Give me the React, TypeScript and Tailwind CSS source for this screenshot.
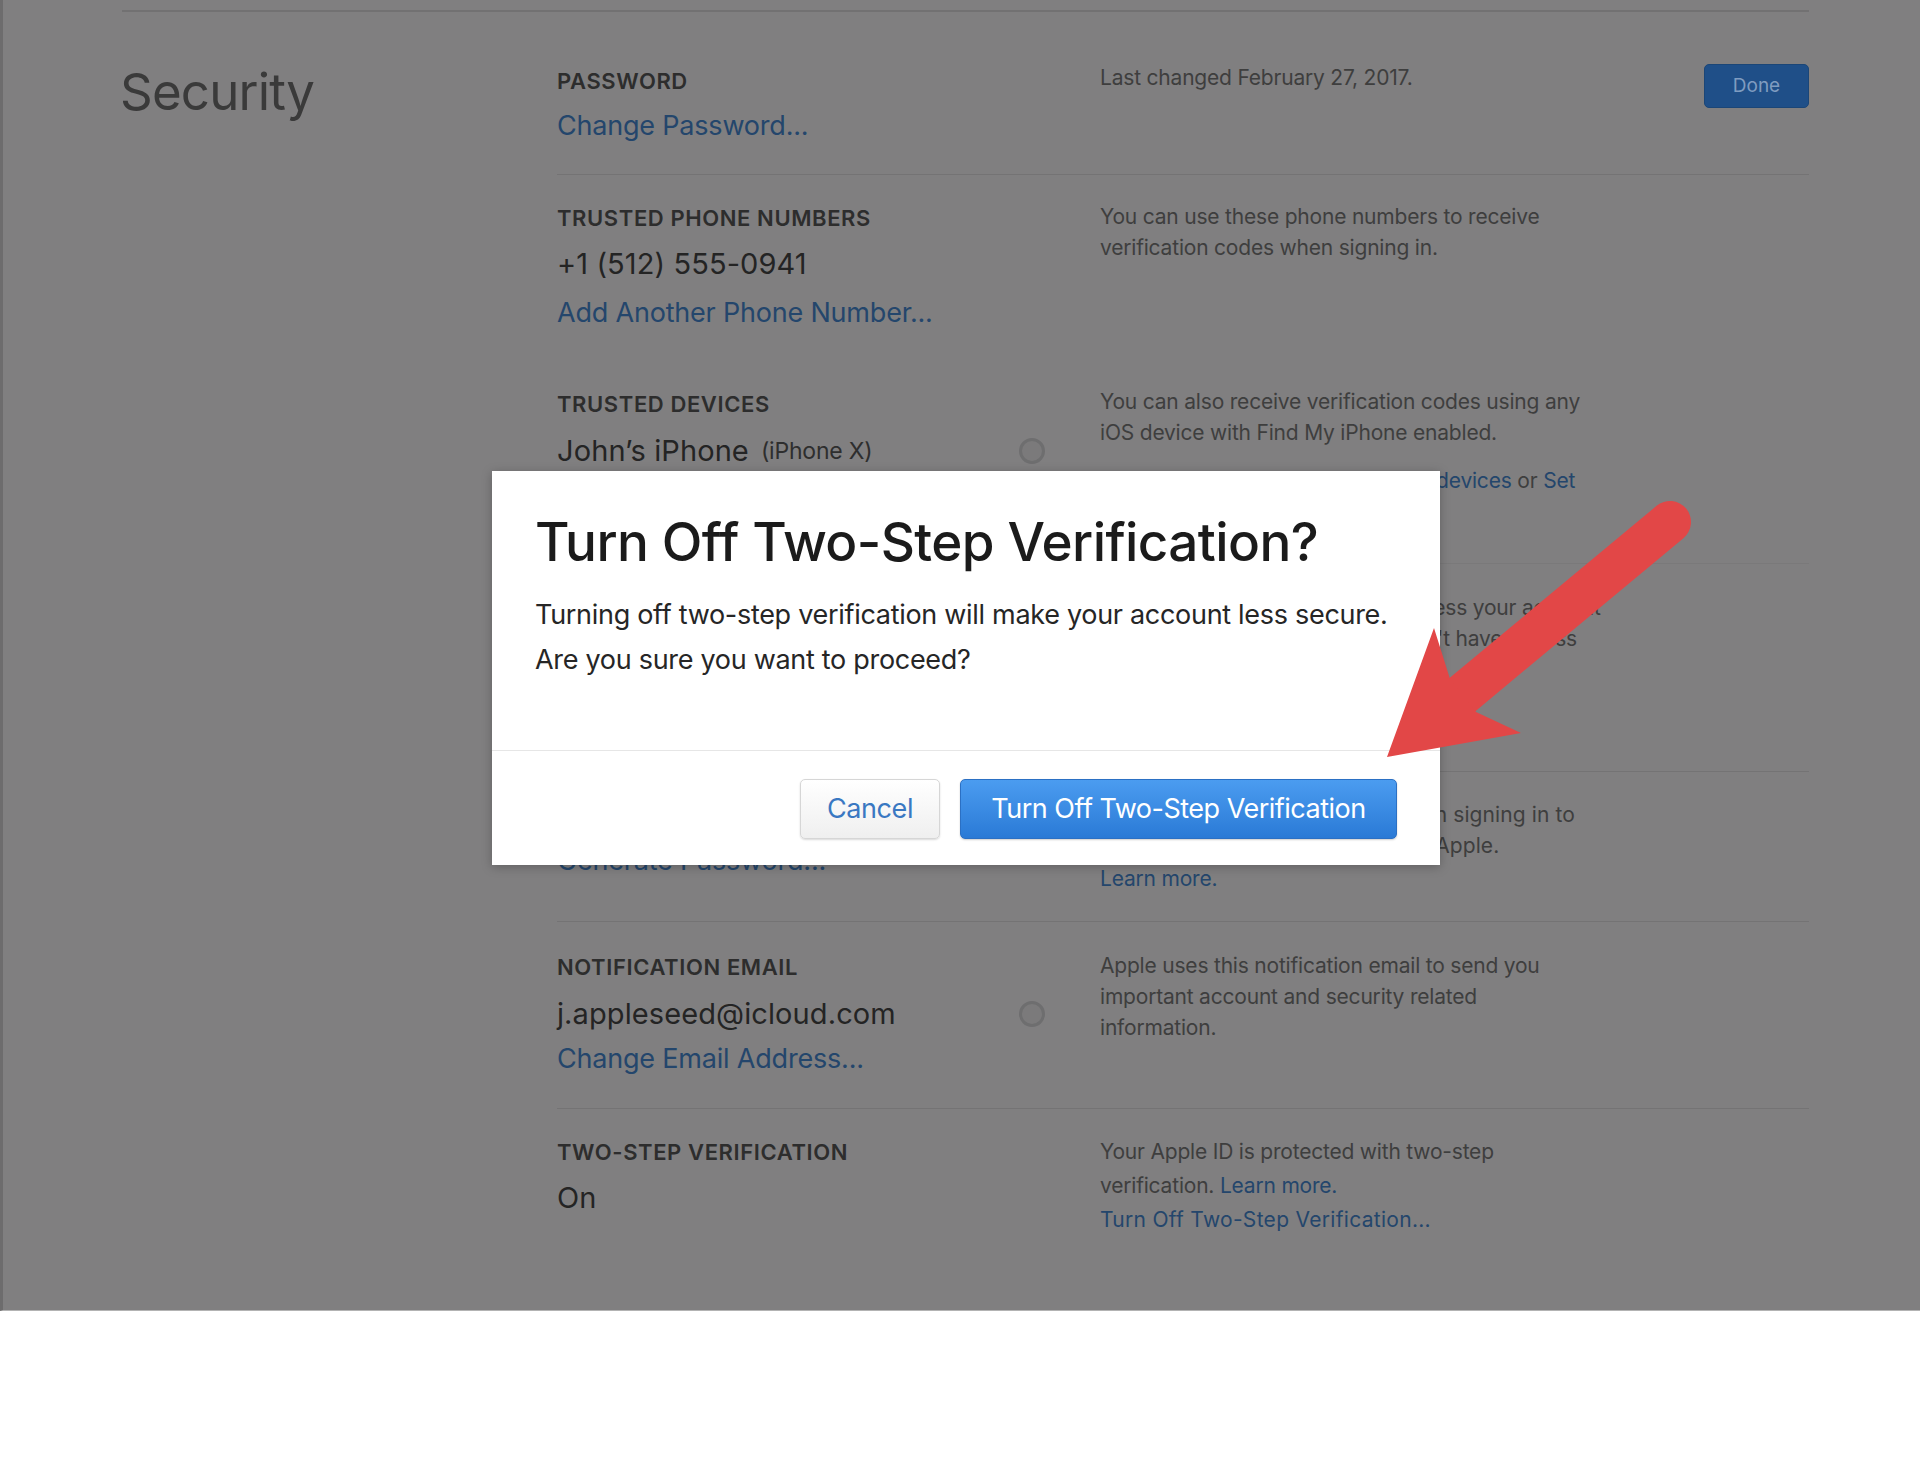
import type { ReactNode } from "react";

const Label = ({ children }: { children: ReactNode }) => (
  <div className="text-[22px] leading-[24px] font-semibold tracking-[0.6px] text-[#2d2d2d] uppercase">
    {children}
  </div>
);

const Value = ({ children, className = "" }: { children: ReactNode; className?: string }) => (
  <div className={`text-[29px] leading-[34px] text-[#242424] tracking-[0.1px] ${className}`}>{children}</div>
);

const Link = ({ children, className = "" }: { children: ReactNode; className?: string }) => (
  <div className={`text-[27px] leading-[34px] text-[#24466c] tracking-[-0.2px] ${className}`}>{children}</div>
);

const Desc = ({ children, className = "" }: { children: ReactNode; className?: string }) => (
  <div className={`text-[21px] leading-[31px] text-[#3e3e3e] tracking-[-0.2px] ${className}`}>{children}</div>
);

const Ring = () => (
  <div className="w-[26px] h-[26px] rounded-full border-[3px] border-[#6e6e6f] bg-[#7b7a7b]" />
);

function Arrow() {
  return (
    <svg
      className="absolute left-0 top-0 pointer-events-none"
      width="1920"
      height="1480"
      viewBox="0 0 1920 1480"
    >
      <line x1="1670" y1="522" x2="1462" y2="695" stroke="#e24747" strokeWidth="42" strokeLinecap="round" />
      <polygon points="1387,757 1434,628 1450,679 1476,712 1521,733" fill="#e24747" />
    </svg>
  );
}

export default function App() {
  return (
    <div className="relative w-[1920px] min-h-[1480px] bg-white font-['Inter','Liberation_Sans',sans-serif]">
      {/* dimmed settings page */}
      <div className="h-[1311px] bg-[#807f80] border-l-[3px] border-[#6d6c6d] border-b border-b-[#b3b3b3] overflow-hidden">
        <div className="ml-[119px] w-[1687px] pt-[10px]">
          <div className="h-[2px] bg-[#727172]" />
          <div className="grid grid-cols-[435px_1fr]">
            <div className="pt-[50px] -ml-[2px] text-[51px] leading-[60px] text-[#3a3a3a] tracking-[-0.8px]">
              Security
            </div>

            <div className="flex flex-col">
              {/* password */}
              <div className="h-[162px] grid grid-cols-[543px_1fr]">
                <div className="pt-[57px]">
                  <Label>Password</Label>
                  <Link className="mt-[16px]">Change Password...</Link>
                </div>
                <div className="flex justify-between items-start">
                  <Desc className="pt-[50px]">Last changed February 27, 2017.</Desc>
                  <div className="mt-[52px] w-[105px] h-[44px] rounded-[5px] bg-[#1f4f88] border border-[#1b4677] flex items-center justify-center text-[19px] text-[#7f9cc0]">
                    Done
                  </div>
                </div>
              </div>

              {/* phone numbers + devices */}
              <div className="h-[389px] border-t border-[#747374] grid grid-cols-[543px_1fr]">
                <div className="pt-[31px]">
                  <Label>Trusted Phone Numbers</Label>
                  <Value className="mt-[17px]">+1 (512) 555-0941</Value>
                  <Link className="mt-[15px]">Add Another Phone Number...</Link>
                  <div className="mt-[62px]">
                    <Label>Trusted Devices</Label>
                  </div>
                  <div className="mt-[18px] flex items-center pr-[55px]">
                    <Value className="tracking-[-0.3px]">John’s iPhone</Value>
                    <span className="ml-[12px] text-[23px] text-[#2e2e2e] tracking-[-0.2px]">(iPhone X)</span>
                    <div className="ml-auto">
                      <Ring />
                    </div>
                  </div>
                </div>
                <div className="pt-[26px]">
                  <Desc>
                    You can use these phone numbers to receive
                    <br />
                    verification codes when signing in.
                  </Desc>
                  <Desc className="mt-[123px]">
                    You can also receive verification codes using any
                    <br />
                    iOS device with Find My iPhone enabled.
                  </Desc>
                  <Desc className="mt-[17px]">
                    <span className="text-[#24466c]">See more about managing trusted devices</span> or{" "}
                    <span className="text-[#24466c]">Set</span>
                  </Desc>
                </div>
              </div>

              {/* recovery */}
              <div className="h-[208px] border-t border-[#7a797a] grid grid-cols-[543px_1fr]">
                <div />
                <div className="pt-[28px]">
                  <Desc>
                    Recovery keys can be used to access your account
                    <br />
                    if you forgot your password or don't have access
                  </Desc>
                </div>
              </div>

              {/* app-specific passwords */}
              <div className="h-[150px] border-t border-[#747374] grid grid-cols-[543px_1fr]">
                <div className="pt-[72px]">
                  <Link>Generate Password...</Link>
                </div>
                <div className="pt-[27px]">
                  <Desc className="tracking-[0.1px]">
                    Use app-specific passwords when signing in to
                    <br />
                    apps or services not provided by Apple.
                  </Desc>
                  <Desc className="text-[#24466c] mt-[2px]">Learn more.</Desc>
                </div>
              </div>

              {/* notification email */}
              <div className="h-[187px] border-t border-[#747374] grid grid-cols-[543px_1fr]">
                <div className="pt-[33px]">
                  <Label>Notification Email</Label>
                  <div className="mt-[18px] flex items-center pr-[55px]">
                    <Value>j.appleseed@icloud.com</Value>
                    <div className="ml-auto">
                      <Ring />
                    </div>
                  </div>
                  <Link className="mt-[11px]">Change Email Address...</Link>
                </div>
                <div className="pt-[28px]">
                  <Desc>
                    Apple uses this notification email to send you
                    <br />
                    important account and security related
                    <br />
                    information.
                  </Desc>
                </div>
              </div>

              {/* two-step */}
              <div className="border-t border-[#747374] grid grid-cols-[543px_1fr]">
                <div className="pt-[31px]">
                  <Label>Two-Step Verification</Label>
                  <Value className="mt-[17px]">On</Value>
                </div>
                <div className="pt-[26px]">
                  <Desc className="leading-[34px]">
                    Your Apple ID is protected with two-step
                    <br />
                    verification. <span className="text-[#24466c]">Learn more.</span>
                  </Desc>
                  <Desc className="leading-[34px] text-[#24466c] tracking-[0.3px]">Turn Off Two-Step Verification...</Desc>
                </div>
              </div>
            </div>
          </div>
        </div>
      </div>

      {/* dialog */}
      <div className="absolute left-[492px] top-[471px] w-[948px] h-[394px] bg-white shadow-[0_2px_10px_rgba(0,0,0,0.25)] flex flex-col">
        <div className="px-[43px] pt-[41px]">
          <div className="text-[53px] leading-[60px] font-medium text-[#1b1b1b] tracking-[-0.6px]">
            Turn Off Two-Step Verification?
          </div>
          <div className="mt-[20px] text-[27px] leading-[45px] text-[#262626] tracking-[-0.3px]">
            Turning off two-step verification will make your account less secure.
            <br />
            Are you sure you want to proceed?
          </div>
        </div>
        <div className="mt-[68px] border-t border-[#e6e6e6] pt-[28px] pr-[43px] flex justify-end gap-[20px]">
          <button className="w-[140px] h-[60px] rounded-[5px] border border-[#d6d6d6] bg-gradient-to-b from-white to-[#efefef] shadow-[0_1px_2px_rgba(0,0,0,0.15)] text-[27px] text-[#3a78c2] tracking-[-0.4px]">
            Cancel
          </button>
          <button className="w-[437px] h-[60px] rounded-[5px] border border-[#2b70c4] bg-gradient-to-b from-[#4b9cf0] to-[#2a7ad6] shadow-[0_1px_2px_rgba(0,0,0,0.2)] text-[27px] text-white tracking-[-0.5px]">
            Turn Off Two-Step Verification
          </button>
        </div>
      </div>

      <Arrow />
    </div>
  );
}
